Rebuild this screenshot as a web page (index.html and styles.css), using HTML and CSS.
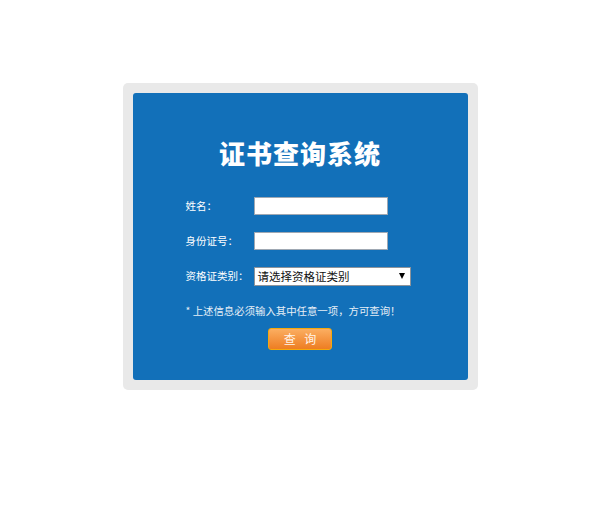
FILE: index.html
```html
<!DOCTYPE html>
<html lang="zh-CN">
<head>
<meta charset="utf-8">
<title>证书查询系统</title>
<link rel="stylesheet" href="styles.css">
</head>
<body>
<div class="frame">
  <div class="panel">
    <h1 class="title">证书查询系统</h1>
    <form class="form">
      <label class="label">姓名：</label>
      <input class="field" type="text">
      <label class="label">身份证号：</label>
      <input class="field" type="text">
      <label class="label">资格证类别：</label>
      <div class="select">
        <span class="select-text">请选择资格证类别</span>
        <span class="select-arrow"></span>
      </div>
    </form>
    <p class="notice">* 上述信息必须输入其中任意一项，方可查询！</p>
    <div class="actions">
      <button class="btn" type="button">查 询</button>
    </div>
  </div>
</div>
</body>
</html>
```

FILE: styles.css
```css
html, body {
  margin: 0;
  padding: 0;
  background: #ffffff;
  font-family: "Noto Sans CJK SC", "Noto Sans", sans-serif;
}

.frame {
  width: 335px;
  margin: 83px auto 0;
  padding: 10px;
  background: #e9e9e9;
  border-radius: 5px;
}

.panel {
  height: 287px;
  box-sizing: border-box;
  background: #1270b9;
  border-radius: 3px;
  padding-top: 45px;
}

.title {
  margin: 0;
  text-align: center;
  color: #ffffff;
  font-family: "Noto Sans CJK SC", serif;
  font-weight: 900;
  font-size: 26px;
  line-height: 30px;
  letter-spacing: 1px;
}

.form {
  margin: 29px 0 0 53px;
  display: grid;
  grid-template-columns: 68px auto;
  grid-auto-rows: 18px;
  row-gap: 17px;
  align-items: center;
  justify-items: start;
}

.label {
  color: #ffffff;
  font-size: 10.5px;
  line-height: 18px;
}

.field {
  width: 134px;
  height: 18px;
  box-sizing: border-box;
  margin: 0;
  padding: 0 3px;
  border: 1px solid #9fa8b3;
  background: #ffffff;
  outline: none;
}

.select {
  width: 157px;
  height: 19px;
  box-sizing: border-box;
  border: 1px solid #8e949b;
  background: #ffffff;
  display: flex;
  align-items: center;
  justify-content: space-between;
  padding: 0 5px 0 3px;
}

.select-text {
  font-size: 11.5px;
  color: #111111;
  line-height: 17px;
}

.select-arrow {
  width: 0;
  height: 0;
  border-left: 3px solid transparent;
  border-right: 3px solid transparent;
  border-top: 6px solid #000000;
}

.notice {
  margin: 18px 0 0 53px;
  color: #e6eef6;
  font-size: 10.4px;
  line-height: 16px;
}

.actions {
  margin-top: 9px;
  display: flex;
  justify-content: center;
}

.btn {
  width: 64px;
  height: 22px;
  box-sizing: border-box;
  margin: 0;
  padding: 0;
  border: 1px solid #f4a90c;
  border-radius: 3px;
  background: linear-gradient(#fbae61, #ee7d22);
  color: #fff4e8;
  font-family: "Noto Sans CJK SC", sans-serif;
  font-size: 12px;
  letter-spacing: 3px;
  text-indent: 3px;
  line-height: 20px;
}
```
